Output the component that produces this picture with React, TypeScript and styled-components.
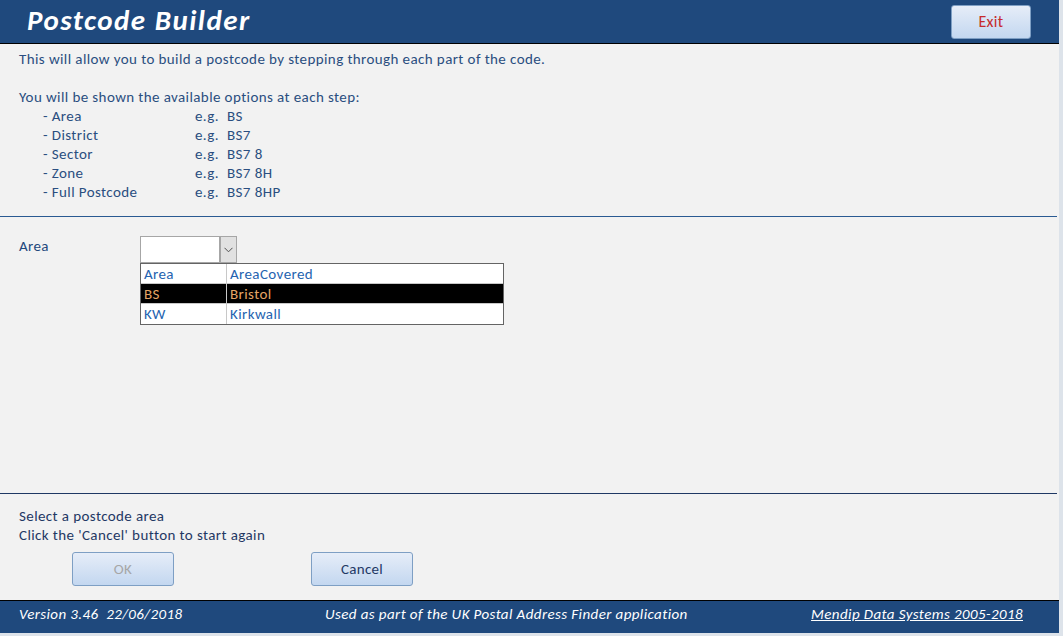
import React from "react";
import styled, { createGlobalStyle } from "styled-components";

const Global = createGlobalStyle`
  html, body { margin: 0; padding: 0; background: #dde3ea; }
  body { font-family: Carlito, Calibri, Lato, "Noto Sans", sans-serif; }
  * { box-sizing: border-box; }
`;

const Window = styled.div`
  width: 1059px;
  height: 633px;
  background: #f2f2f2;
  display: flex;
  flex-direction: column;
  font-size: 15px;
  letter-spacing: 0.4px;
`;

const Header = styled.header`
  height: 44px;
  flex: none;
  background: #1f497d;
  border-bottom: 1px solid #000;
  display: flex;
  align-items: center;
  justify-content: space-between;
  padding: 0 28px 0 27px;
`;

const Title = styled.h1`
  margin: 0;
  color: #fff;
  font-size: 29px;
  font-weight: 700;
  font-style: italic;
  letter-spacing: 1.5px;
  line-height: 1;
  padding-bottom: 3px;
`;

const Button = styled.button<{ $tone?: "exit" | "normal" | "disabled" }>`
  font-family: inherit;
  font-size: 15px;
  letter-spacing: 0.3px;
  height: 34px;
  border: 1px solid #7e9fc4;
  border-radius: 3px;
  background: linear-gradient(#e6edf8, #c3d7f0);
  color: ${(p) =>
    p.$tone === "exit" ? "#c62b2b" : p.$tone === "disabled" ? "#a6a6a6" : "#1f3864"};
  padding: 0;
  cursor: default;
`;

const ExitButton = styled(Button)`
  width: 80px;
  font-size: 16px;
`;

const Intro = styled.section`
  flex: none;
  padding: 6px 19px 14px;
  color: #2a4e80;
  line-height: 19px;
`;

const Line = styled.div`
  height: 19px;
  white-space: pre;
`;

const StepRow = styled.div`
  display: grid;
  grid-template-columns: 152px 32px auto;
  padding-left: 24px;
  height: 19px;
`;

const Rule = styled.hr<{ $color: string }>`
  margin: 0;
  border: 0;
  height: 1px;
  width: 1057px;
  background: ${(p) => p.$color};
  flex: none;
`;

const AreaSection = styled.section`
  flex: 1;
  padding: 19px 19px 0;
  display: flex;
  align-items: flex-start;
`;

const Label = styled.label`
  width: 121px;
  color: #1f497d;
  padding-top: 1px;
  line-height: 19px;
`;

const ComboWrap = styled.div`
  position: relative;
`;

const Combo = styled.div`
  width: 97px;
  height: 27px;
  border: 1px solid #a6a6a6;
  background: #fff;
  display: flex;
  justify-content: flex-end;
`;

const ComboButton = styled.div`
  width: 17px;
  height: 25px;
  background: #e1e1e1;
  border-left: 2px solid #a6a6a6;
  display: flex;
  align-items: center;
  justify-content: center;
`;

const List = styled.div`
  position: absolute;
  left: 0;
  top: 27px;
  width: 364px;
  border: 1px solid #646464;
  background: #fff;
`;

const ListRow = styled.div<{ $selected?: boolean; $last?: boolean }>`
  display: grid;
  grid-template-columns: 86px 1fr;
  height: 20px;
  line-height: 20px;
  background: ${(p) => (p.$selected ? "#000" : "#fff")};
  color: ${(p) => (p.$selected ? "#e5a566" : "#2563b0")};
  border-bottom: ${(p) => (p.$last ? "0" : "1px solid #c8c8c8")};
`;

const Cell = styled.div<{ $first?: boolean }>`
  padding-left: 3px;
  border-right: ${(p) => (p.$first ? "1px solid #c8c8c8" : "0")};
`;

const BottomSection = styled.section`
  flex: none;
  height: 106px;
  padding: 13px 19px 0;
  color: #1f3864;
  line-height: 19px;
`;

const Buttons = styled.div`
  display: flex;
  margin-top: 7px;
  padding-left: 53px;
  gap: 137px;
`;

const WideButton = styled(Button)`
  width: 102px;
`;

const Footer = styled.footer`
  flex: none;
  height: 33px;
  background: #1f497d;
  border-top: 1px solid #000;
  color: #fff;
  font-style: italic;
  display: grid;
  grid-template-columns: 306px 1fr auto;
  align-items: center;
  padding: 0 36px 6px 19px;
`;

const FooterLink = styled.span`
  text-decoration: underline;
`;

const steps: [string, string][] = [
  ["- Area", "BS"],
  ["- District", "BS7"],
  ["- Sector", "BS7 8"],
  ["- Zone", "BS7 8H"],
  ["- Full Postcode", "BS7 8HP"],
];

const areas: [string, string][] = [
  ["Area", "AreaCovered"],
  ["BS", "Bristol"],
  ["KW", "Kirkwall"],
];

export default function App() {
  return (
    <>
      <Global />
      <Window>
        <Header>
          <Title>Postcode Builder</Title>
          <ExitButton $tone="exit">Exit</ExitButton>
        </Header>
        <Intro>
          <Line>This will allow you to build a postcode by stepping through each part of the code.</Line>
          <Line> </Line>
          <Line>You will be shown the available options at each step:</Line>
          {steps.map(([name, eg]) => (
            <StepRow key={name}>
              <span>{name}</span>
              <span>e.g.</span>
              <span>{eg}</span>
            </StepRow>
          ))}
        </Intro>
        <Rule $color="#2a5a92" />
        <AreaSection>
          <Label>Area</Label>
          <ComboWrap>
            <Combo>
              <ComboButton>
                <svg width="9" height="6" viewBox="0 0 9 6">
                  <path d="M0.5 0.8 L4.5 4.8 L8.5 0.8" fill="none" stroke="#505050" strokeWidth="1" />
                </svg>
              </ComboButton>
            </Combo>
            <List>
              {areas.map(([a, b], i) => (
                <ListRow key={a} $selected={i === 1} $last={i === areas.length - 1}>
                  <Cell $first>{a}</Cell>
                  <Cell>{b}</Cell>
                </ListRow>
              ))}
            </List>
          </ComboWrap>
        </AreaSection>
        <Rule $color="#1f3864" />
        <BottomSection>
          <Line>Select a postcode area</Line>
          <Line>Click the 'Cancel' button to start again</Line>
          <Buttons>
            <WideButton $tone="disabled">OK</WideButton>
            <WideButton>Cancel</WideButton>
          </Buttons>
        </BottomSection>
        <Footer>
          <span>Version 3.46&nbsp;&nbsp;22/06/2018</span>
          <span>Used as part of the UK Postal Address Finder application</span>
          <FooterLink>Mendip Data Systems 2005-2018</FooterLink>
        </Footer>
      </Window>
    </>
  );
}
